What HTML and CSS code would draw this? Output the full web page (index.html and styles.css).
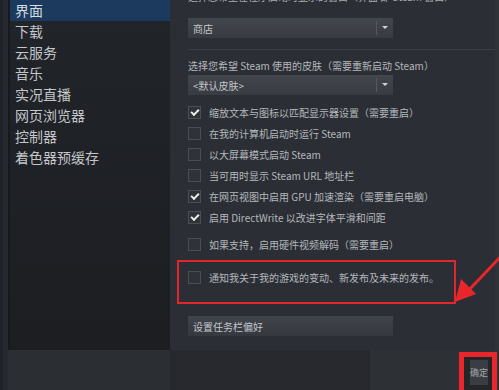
FILE: index.html
```html
<!DOCTYPE html>
<html lang="zh-CN">
<head>
  <meta charset="UTF-8">
  <title>Steam 设置 - 界面</title>
  <link rel="stylesheet" href="styles.css">
</head>
<body>
  <div class="app">
    <div class="edge"></div>

    <div class="frame">
      <div class="top">
        <!-- left menu -->
        <nav class="sidebar">
          <div class="nav-item active">界面</div>
          <div class="nav-item">下载</div>
          <div class="nav-item">云服务</div>
          <div class="nav-item">音乐</div>
          <div class="nav-item">实况直播</div>
          <div class="nav-item">网页浏览器</div>
          <div class="nav-item">控制器</div>
          <div class="nav-item">着色器预缓存</div>
        </nav>

        <!-- settings panel -->
        <section class="panel">
          <p class="cut-label">选择您希望在程序启动时显示的窗口（界面 即 Steam 窗口）</p>
          <div class="select first-select">
            <span class="select-text">商店</span>
            <span class="select-arrow"></span>
          </div>

          <div class="divider"></div>

          <p class="label">选择您希望 Steam 使用的皮肤（需要重新启动 Steam）</p>
          <div class="select">
            <span class="select-text">&lt;默认皮肤&gt;</span>
            <span class="select-arrow"></span>
          </div>

          <div class="checks">
            <label class="check-row"><span class="box checked"></span>缩放文本与图标以匹配显示器设置（需要重启）</label>
            <label class="check-row"><span class="box"></span>在我的计算机启动时运行 Steam</label>
            <label class="check-row"><span class="box"></span>以大屏幕模式启动 Steam</label>
            <label class="check-row"><span class="box"></span>当可用时显示 Steam URL 地址栏</label>
            <label class="check-row"><span class="box checked"></span>在网页视图中启用 GPU 加速渲染（需要重启电脑）</label>
            <label class="check-row"><span class="box checked"></span>启用 DirectWrite 以改进字体平滑和间距</label>
          </div>

          <label class="check-row spaced"><span class="box"></span>如果支持，启用硬件视频解码（需要重启）</label>

          <div class="highlight">
            <label class="check-row"><span class="box"></span>通知我关于我的游戏的变动、新发布及未来的发布。</label>
          </div>

          <button class="wide-btn">设置任务栏偏好</button>
        </section>
      </div>

      <div class="bottom">
        <div class="bottom-left"></div>
        <div class="bottom-mid"></div>
        <div class="bottom-right">
          <div class="ok-mark">
            <button class="ok-btn">确定</button>
          </div>
        </div>
      </div>
    </div>

    <!-- red annotation arrow -->
    <svg class="arrow" width="60" height="60" viewBox="0 0 60 60">
      <line x1="60" y1="2" x2="22" y2="42" stroke="#e8262b" stroke-width="3"/>
      <polygon points="10,52 16,29 31,44" fill="#e8262b"/>
    </svg>
  </div>
</body>
</html>
```

FILE: styles.css
```css
/* General */
body {
  margin: 0;
  padding: 0;
  background-color: #2b2e33;
  font-family: 'Noto Sans CJK SC', 'Noto Sans', sans-serif;
  overflow: hidden;
}

.app {
  position: relative;
  display: flex;
  width: 499px;
  height: 390px;
  overflow: hidden;
}

.edge {
  width: 8px;
  background: linear-gradient(to right, #1f2329 3px, #262a30 3px);
}

.frame {
  flex: 1;
  display: flex;
  flex-direction: column;
}

.top {
  display: flex;
  height: 350px;
}

/* Sidebar */
.sidebar {
  width: 160px;
  border-left: 2px solid #17191c;
  background: linear-gradient(#212429, #1c1e22);
}

.nav-item {
  height: 21px;
  line-height: 21px;
  padding-left: 5px;
  font-size: 14px;
  color: #c3c6ca;
}

.nav-item.active {
  background-color: #1c3a5d;
  color: #d4dbe2;
}

/* Panel */
.panel {
  flex: 1;
  background-color: #2b2e34;
  padding-left: 18px;
  border-right: 4px solid #303338;
  font-size: 10px;
  color: #b4b8bc;
}

.panel p {
  margin: 0;
}

.cut-label {
  line-height: 14px;
  margin-top: -10px !important;
  color: #a9adb1;
}

.select {
  display: flex;
  align-items: center;
  width: 205px;
  height: 20px;
  margin-top: 2px;
  background: linear-gradient(#42464d, #383b41);
}

.first-select {
  margin-top: 14px;
}

.select-text {
  flex: 1;
  padding-left: 5px;
  color: #c4c7cb;
}

.select-arrow {
  width: 16px;
  height: 14px;
  border-left: 1px solid #55595f;
  position: relative;
}

.select-arrow::after {
  content: '';
  position: absolute;
  left: 5px;
  top: 5px;
  border-left: 3px solid transparent;
  border-right: 3px solid transparent;
  border-top: 3px solid #d0d3d6;
}

.divider {
  height: 1px;
  margin-top: 11px;
  background-color: #3a3d43;
}

.label {
  line-height: 14px;
  margin-top: 9px !important;
  color: #b4b8bc;
}

/* Checkboxes */
.checks {
  margin-top: 7px;
}

.check-row {
  display: flex;
  align-items: center;
  gap: 8px;
  height: 21px;
  white-space: nowrap;
}

.check-row.spaced {
  margin-top: 6px;
}

.box {
  width: 11px;
  height: 11px;
  border: 1px solid #4b4f55;
  background-color: #2f3237;
  position: relative;
}

.box.checked::after {
  content: '';
  position: absolute;
  left: 2px;
  top: 0px;
  width: 6px;
  height: 3px;
  border-left: 2px solid #eceeef;
  border-bottom: 2px solid #eceeef;
  transform: translate(0, 2px) rotate(-45deg);
}

.highlight {
  box-sizing: border-box;
  width: 279px;
  height: 44px;
  margin-top: 5px;
  margin-left: -11px;
  padding: 5px 0 0 9px;
  border: 2px solid #e3262a;
}

.wide-btn {
  display: block;
  width: 205px;
  height: 20px;
  margin-top: 12px;
  padding: 0 0 0 5px;
  border: none;
  text-align: left;
  font-family: 'Noto Sans CJK SC', 'Noto Sans', sans-serif;
  font-size: 10px;
  color: #c4c7cb;
  background: linear-gradient(#40444b, #35383e);
}

/* Bottom bar */
.bottom {
  flex: 1;
  display: flex;
}

.bottom-left {
  width: 162px;
  background-color: #2b2e33;
}

.bottom-mid {
  width: 200px;
  background-color: #27292e;
}

.bottom-right {
  flex: 1;
  display: flex;
  justify-content: flex-end;
  padding-right: 2px;
  background-color: #2d3035;
}

.ok-mark {
  width: 22px;
  margin-top: 2px;
  padding: 3px 0 0 6px;
  border: 5px solid #e8262b;
  border-bottom: none;
  background-color: #232529;
}

.ok-btn {
  display: block;
  width: 18px;
  height: 25px;
  padding: 0;
  border: none;
  font-family: 'Noto Sans CJK SC', sans-serif;
  font-size: 9px;
  color: #a5a8ac;
  background-color: #3a3d43;
}

/* annotation overlay */
.arrow {
  position: absolute;
  left: 445px;
  top: 250px;
}
```
